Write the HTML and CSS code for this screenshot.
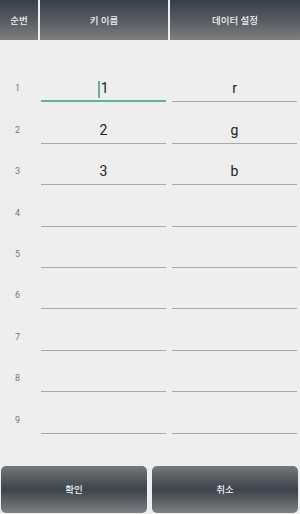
FILE: index.html
```html
<!DOCTYPE html>
<html lang="ko">
<head>
    <meta charset="UTF-8">
    <meta name="viewport" content="width=device-width, initial-scale=1.0">
    <title>키 설정</title>
    <link rel="stylesheet" href="styles.css">
</head>
<body>
    <div class="header">
        <div class="head-cell col-no">순번</div>
        <div class="head-cell col-key">키 이름</div>
        <div class="head-cell col-data">데이터 설정</div>
    </div>

    <div class="rows">
        <div class="row">
            <div class="num">1</div>
            <div class="field focused"><span class="caret"></span>1</div>
            <div class="field">r</div>
        </div>
        <div class="row">
            <div class="num">2</div>
            <div class="field">2</div>
            <div class="field">g</div>
        </div>
        <div class="row">
            <div class="num">3</div>
            <div class="field">3</div>
            <div class="field">b</div>
        </div>
        <div class="row">
            <div class="num">4</div>
            <div class="field"></div>
            <div class="field"></div>
        </div>
        <div class="row">
            <div class="num">5</div>
            <div class="field"></div>
            <div class="field"></div>
        </div>
        <div class="row">
            <div class="num">6</div>
            <div class="field"></div>
            <div class="field"></div>
        </div>
        <div class="row">
            <div class="num">7</div>
            <div class="field"></div>
            <div class="field"></div>
        </div>
        <div class="row">
            <div class="num">8</div>
            <div class="field"></div>
            <div class="field"></div>
        </div>
        <div class="row">
            <div class="num">9</div>
            <div class="field"></div>
            <div class="field"></div>
        </div>
    </div>

    <div class="buttons">
        <button class="btn">확인</button>
        <button class="btn">취소</button>
    </div>
</body>
</html>
```

FILE: styles.css
```css
:root {
    --bg-color: #eeeeee;
    --accent-color: #5fb3a2;
    --line-color: #a8a8a8;
}

body {
    font-family: Roboto, 'Noto Sans CJK KR', sans-serif;
    margin: 0;
    padding: 0;
    width: 300px;
    height: 514px;
    background-color: var(--bg-color);
    overflow: hidden;
}

.header {
    display: flex;
    gap: 2px;
    height: 40px;
}

.head-cell {
    display: flex;
    align-items: center;
    justify-content: center;
    background: linear-gradient(to bottom, #38404a 0%, #555b62 50%, #7e7f80 100%);
    color: #f2f2f2;
    font-size: 9.5px;
    font-weight: 500;
}

.col-no {
    width: 38px;
}

.col-key {
    width: 128px;
}

.col-data {
    flex: 1;
}

.rows {
    padding-top: 21px;
}

.row {
    display: flex;
    align-items: flex-end;
    height: 41.4px;
}

.num {
    width: 41px;
    padding-left: 15px;
    box-sizing: border-box;
    align-self: flex-end;
    margin-bottom: 9px;
    font-size: 9px;
    color: #777;
}

.field {
    width: 125px;
    height: 26px;
    line-height: 26px;
    border-bottom: 1.5px solid var(--line-color);
    text-align: center;
    font-size: 14px;
    color: #222;
}

.field + .field {
    margin-left: 6px;
}

.field.focused {
    border-bottom: 2px solid var(--accent-color);
    height: 25.5px;
}

.caret {
    display: inline-block;
    width: 1.5px;
    height: 17px;
    margin-right: 1px;
    vertical-align: middle;
    background: var(--accent-color);
}

.buttons {
    display: flex;
    gap: 5px;
    padding: 0 2px 0 1px;
    margin-top: 32px;
}

.btn {
    flex: 1;
    height: 47px;
    border: none;
    border-radius: 5px;
    background: linear-gradient(to bottom, #76787b 0%, #3b434c 50%, #7d7f82 100%);
    color: #f2f2f2;
    font-family: inherit;
    font-size: 9.5px;
    font-weight: 500;
}
```
